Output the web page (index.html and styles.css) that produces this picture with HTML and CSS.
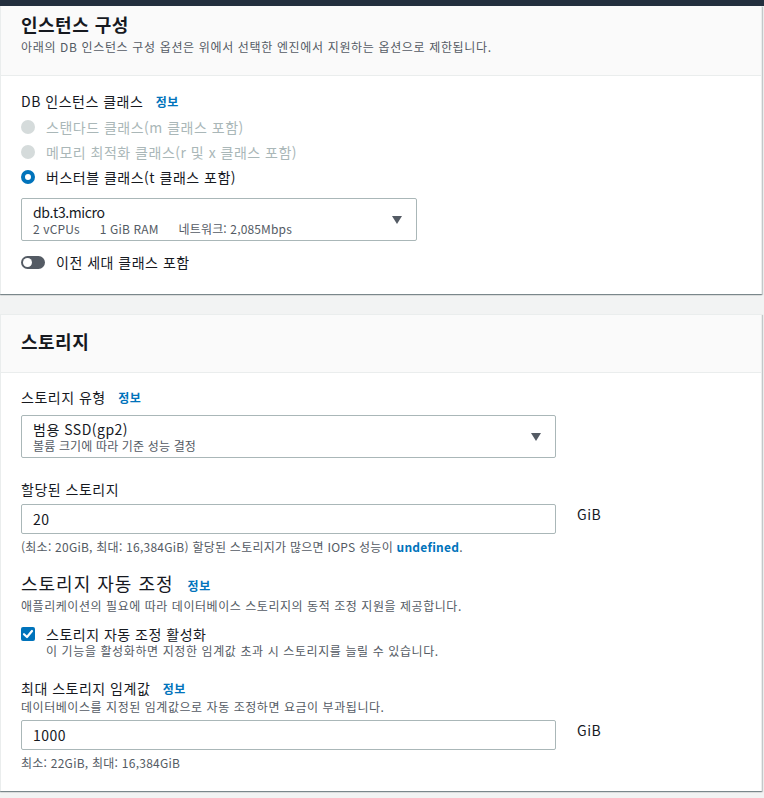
FILE: index.html
```html
<!DOCTYPE html>
<html lang="ko">
<head>
<meta charset="utf-8">
<link rel="stylesheet" href="styles.css">
</head>
<body>
<div class="topbar"></div>

<section class="panel">
  <header class="panel-head first">
    <h2 class="panel-title">인스턴스 구성</h2>
    <p class="panel-desc">아래의 DB 인스턴스 구성 옵션은 위에서 선택한 엔진에서 지원하는 옵션으로 제한됩니다.</p>
  </header>
  <div class="panel-body body1">
    <div class="label">DB 인스턴스 클래스 <a class="info">정보</a></div>
    <div class="radios">
      <div class="radio-row disabled"><span class="radio"></span><span>스탠다드 클래스(m 클래스 포함)</span></div>
      <div class="radio-row disabled"><span class="radio"></span><span>메모리 최적화 클래스(r 및 x 클래스 포함)</span></div>
      <div class="radio-row"><span class="radio checked"></span><span>버스터블 클래스(t 클래스 포함)</span></div>
    </div>
    <div class="select narrow sel1">
      <div class="select-text">
        <div class="select-main latin">db.t3.micro</div>
        <div class="select-sub"><span>2 vCPUs</span><span>1 GiB RAM</span><span>네트워크: 2,085Mbps</span></div>
      </div>
      <svg class="caret" width="10" height="8" viewBox="0 0 10 8"><polygon points="0,0 10,0 5,8" fill="#545b64"/></svg>
    </div>
    <div class="toggle-row">
      <span class="toggle"><span class="knob"></span></span>
      <span>이전 세대 클래스 포함</span>
    </div>
  </div>
</section>

<section class="panel second">
  <header class="panel-head">
    <h2 class="panel-title">스토리지</h2>
  </header>
  <div class="panel-body body2">
    <div class="label">스토리지 유형 <a class="info">정보</a></div>
    <div class="select wide sel2">
      <div class="select-text">
        <div class="select-main">범용 SSD(gp2)</div>
        <div class="select-sub">볼륨 크기에 따라 기준 성능 결정</div>
      </div>
      <svg class="caret" width="10" height="8" viewBox="0 0 10 8"><polygon points="0,0 10,0 5,8" fill="#545b64"/></svg>
    </div>

    <div class="label gap-field">할당된 스토리지</div>
    <div class="input-row">
      <div class="input">20</div>
      <span class="unit">GiB</span>
    </div>
    <div class="hint">(최소: 20GiB, 최대: 16,384GiB) 할당된 스토리지가 많으면 IOPS 성능이 <a class="info">undefined</a>.</div>

    <div class="sub-title">스토리지 자동 조정 <a class="info">정보</a></div>
    <div class="desc">애플리케이션의 필요에 따라 데이터베이스 스토리지의 동적 조정 지원을 제공합니다.</div>
    <div class="check-row">
      <span class="checkbox"><svg width="14" height="14" viewBox="0 0 14 14"><polyline points="3,7.2 6,10 11,4" fill="none" stroke="#fff" stroke-width="2.2" stroke-linecap="round" stroke-linejoin="round"/></svg></span>
      <div class="check-text">
        <div class="check-label">스토리지 자동 조정 활성화</div>
        <div class="check-desc">이 기능을 활성화하면 지정한 임계값 초과 시 스토리지를 늘릴 수 있습니다.</div>
      </div>
    </div>

    <div class="label gap-max">최대 스토리지 임계값 <a class="info">정보</a></div>
    <div class="desc">데이터베이스를 지정된 임계값으로 자동 조정하면 요금이 부과됩니다.</div>
    <div class="input-row max-row">
      <div class="input">1000</div>
      <span class="unit">GiB</span>
    </div>
    <div class="hint">최소: 22GiB, 최대: 16,384GiB</div>
  </div>
</section>
</body>
</html>
```

FILE: styles.css
```css
* { box-sizing: border-box; }
html, body { margin: 0; padding: 0; }
body {
  background: #f2f3f3;
  font-family: "Noto Sans CJK KR", "Noto Sans", sans-serif;
  color: #16191f;
  font-size: 14px;
  letter-spacing: 0.5px;
  width: 764px;
  height: 798px;
  overflow: hidden;
}
.topbar { height: 6px; background: #232f3e; }

.panel {
  background: #fff;
  margin-right: 2px;
  border-left: 1px solid #eaeded;
  border-right: 1px solid #eaeded;
  box-shadow: 0 1px 1px 0 rgba(0,28,36,.3), 1px 1px 1px 0 rgba(0,28,36,.15), -1px 1px 1px 0 rgba(0,28,36,.15);
}
.panel.second { margin-top: 20px; border-top: 1px solid #eaeded; }

.panel-head {
  background: #fafafa;
  border-bottom: 1px solid #eaeded;
  padding: 15px 20px 20px;
}
.panel-head.first { padding: 7px 20px 20px; }
.panel-title {
  margin: 0;
  font-size: 18px;
  line-height: 22px;
  font-weight: 700;
}
.panel-desc {
  margin: 4px 0 0;
  font-size: 12px;
  line-height: 16px;
  color: #545b64;
  letter-spacing: 0.65px;
}

.panel-body { padding: 0 20px 20px; }
.body1 { padding-top: 15px; padding-bottom: 22px; }
.body2 { padding-top: 14px; }

.label { font-size: 14px; line-height: 20px; }
.info {
  color: #0073bb;
  font-weight: 700;
  font-size: 12px;
  margin-left: 8px;
  letter-spacing: 0.5px;
  text-decoration: none;
}

.radios { margin-top: 2px; }
.radio-row {
  display: flex;
  align-items: center;
  height: 25px;
  gap: 11px;
  line-height: 20px;
}
.radio-row.disabled { color: #aab7b8; }
.radio {
  width: 14px; height: 14px;
  border-radius: 50%;
  background: #d5dbdb;
  flex: none;
}
.radio.checked {
  background: #fff;
  border: 4px solid #0073bb;
}

.select {
  margin-top: 9px;
  border: 1px solid #aab7b8;
  border-radius: 2px;
  display: flex;
  align-items: center;
  justify-content: space-between;
  padding: 4px 14px 3px 11px;
}
.select.narrow { width: 396px; }
.select.wide { width: 535px; margin-top: 7px; }
.select-main { font-size: 14px; line-height: 18px; }
.select-main.latin { letter-spacing: -0.4px; }
.select-sub {
  font-size: 12px;
  line-height: 16px;
  color: #545b64;
  display: flex;
  gap: 20px;
  letter-spacing: 0.15px;
}
.caret { flex: none; }

.toggle-row {
  margin-top: 11px;
  display: flex;
  align-items: center;
  gap: 11px;
  line-height: 20px;
}
.toggle {
  width: 24px; height: 13px;
  border-radius: 7px;
  background: #545b64;
  position: relative;
  flex: none;
}
.knob {
  position: absolute;
  left: 2px; top: 2px;
  width: 9px; height: 9px;
  border-radius: 50%;
  background: #fff;
}

.gap-field { margin-top: 21px; }
.input-row {
  margin-top: 5px;
  display: flex;
  align-items: flex-start;
  gap: 21px;
}
.input {
  width: 535px;
  height: 30px;
  border: 1px solid #aab7b8;
  border-radius: 2px;
  padding: 0 11px;
  line-height: 28px;
  font-size: 14px;
}
.unit { font-size: 14px; line-height: 20px; }
.hint {
  margin-top: 5px;
  font-size: 12px;
  line-height: 16px;
  color: #545b64;
  letter-spacing: 0.25px;
}
.hint .info { margin-left: 0; letter-spacing: 0.25px; }

.sub-title {
  margin-top: 16px;
  font-size: 18px;
  line-height: 24px;
  letter-spacing: 1px;
}
.sub-title .info { margin-left: 8px; }
.desc {
  font-size: 12px;
  line-height: 16px;
  color: #545b64;
  letter-spacing: 0.55px;
}
.check-row {
  margin-top: 11px;
  display: flex;
  gap: 11px;
}
.checkbox {
  width: 14px; height: 14px;
  margin-top: 2px;
  background: #0073bb;
  border-radius: 2px;
  flex: none;
  display: flex;
}
.check-label { font-size: 14px; line-height: 18px; }
.check-desc { font-size: 12px; line-height: 16px; color: #545b64; letter-spacing: 0.6px; }

.gap-max { margin-top: 19px; }
```
